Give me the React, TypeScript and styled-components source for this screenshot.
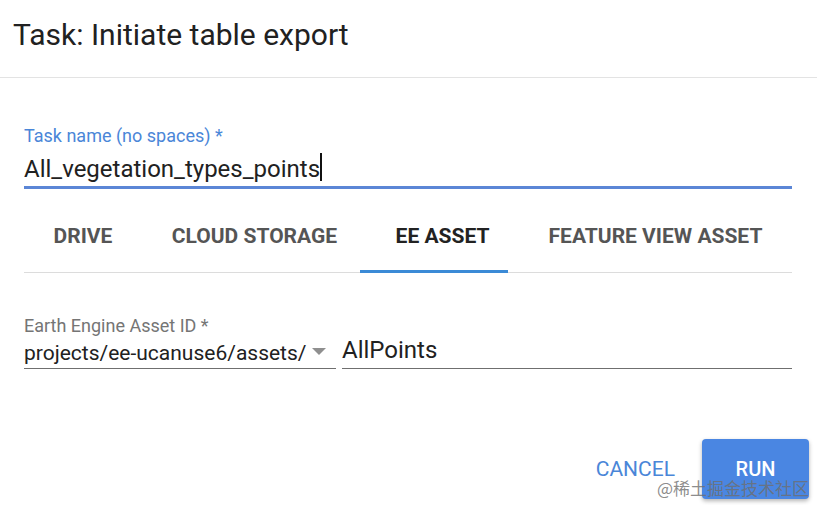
import React from "react";
import styled, { createGlobalStyle } from "styled-components";

const Global = createGlobalStyle`
  html, body { margin: 0; padding: 0; background: #fff; }
  body { font-family: Roboto, "Noto Sans", Arial, sans-serif; }
  * { box-sizing: border-box; }
`;

const Dialog = styled.div`
  position: relative;
  width: 817px;
  height: 505px;
  background: #fff;
  display: flex;
  flex-direction: column;
  overflow: hidden;
`;

const Header = styled.div`
  flex-shrink: 0;
  height: 78px;
  border-bottom: 1px solid #e3e3e3;
  padding: 17px 13px 0;
`;

const Title = styled.h1`
  margin: 0;
  font-size: 30px;
  font-weight: 400;
  color: #212121;
  line-height: 36px;
`;

const Body = styled.div`
  flex-shrink: 0;
  padding: 47px 25px 0 24px;
  display: flex;
  flex-direction: column;
`;

const Label = styled.div<{ $focused?: boolean }>`
  font-size: 18px;
  line-height: 21px;
  color: ${(p) => (p.$focused ? "#4a86d8" : "#757575")};
`;

const TextField = styled.div<{ $focused?: boolean; $top?: number; $bottom?: number }>`
  font-size: 24px;
  line-height: 28px;
  color: #212121;
  white-space: nowrap;
  padding-top: ${(p) => p.$top ?? 9}px;
  padding-bottom: ${(p) => p.$bottom ?? 3}px;
  border-bottom: ${(p) => (p.$focused ? "3px solid #5b86d6" : "1px solid #6f6f6f")};
`;

const Caret = styled.span`
  display: inline-block;
  width: 2px;
  height: 28px;
  background: #111;
  vertical-align: top;
  position: relative;
  top: -2px;
`;

const Tabs = styled.div`
  display: flex;
  height: 84px;
  border-bottom: 1px solid #dcdcdc;
`;

const Tab = styled.div<{ $active?: boolean; $w: number; $shift: number }>`
  position: relative;
  width: ${(p) => p.$w}px;
  display: flex;
  justify-content: center;
  padding-top: 35px;
  padding-left: ${(p) => p.$shift}px;
  font-size: 21px;
  font-weight: 700;
  color: ${(p) => (p.$active ? "#222" : "#555")};
  white-space: nowrap;
  &::after {
    content: "";
    display: ${(p) => (p.$active ? "block" : "none")};
    position: absolute;
    left: 0;
    right: 0;
    bottom: -1px;
    height: 3px;
    background: #3b8ad6;
  }
`;

const AssetSection = styled.div`
  margin-top: 42px;
`;

const AssetRow = styled.div`
  display: flex;
  align-items: flex-end;
  gap: 6px;
`;

const Select = styled.div`
  width: 312px;
  display: flex;
  align-items: center;
  justify-content: space-between;
  padding: 5px 10px 2px 0;
  border-bottom: 1px solid #6f6f6f;
  font-size: 21px;
  line-height: 25px;
  color: #212121;
  white-space: nowrap;
`;

const Arrow = styled.span`
  width: 0;
  height: 0;
  border-left: 7px solid transparent;
  border-right: 7px solid transparent;
  border-top: 7px solid #8f8f8f;
  margin-top: -4px;
`;

const AssetInput = styled(TextField)`
  flex: 1;
`;

const Actions = styled.div`
  flex-shrink: 0;
  display: flex;
  justify-content: flex-end;
  align-items: center;
  gap: 27px;
  padding-right: 8px;
  margin-top: 70px;
`;

const FlatButton = styled.button`
  border: none;
  background: none;
  font-family: inherit;
  font-size: 21px;
  color: #4a86d8;
  padding: 0;
  cursor: pointer;
`;

const RaisedButton = styled.button`
  width: 107px;
  height: 60px;
  border: none;
  border-radius: 4px;
  background: #4a86e2;
  color: #fff;
  font-family: inherit;
  font-size: 20px;
  font-weight: 500;
  box-shadow: 0 2px 4px rgba(0, 0, 0, 0.3);
  cursor: pointer;
`;

const Watermark = styled.div`
  position: absolute;
  right: 8px;
  bottom: 5px;
  font-size: 17px;
  color: rgba(110, 110, 110, 0.8);
  font-family: "Noto Sans CJK SC", sans-serif;
  pointer-events: none;
`;

export default function App() {
  return (
    <>
      <Global />
      <Dialog>
        <Header>
          <Title>Task: Initiate table export</Title>
        </Header>
        <Body>
          <Label $focused>Task name (no spaces) *</Label>
          <TextField $focused>
            All_vegetation_types_points
            <Caret />
          </TextField>
          <Tabs>
            <Tab $w={118} $shift={0}>DRIVE</Tab>
            <Tab $w={218} $shift={7}>CLOUD STORAGE</Tab>
            <Tab $w={148} $shift={17} $active>
              EE ASSET
            </Tab>
            <Tab $w={284} $shift={11}>FEATURE VIEW ASSET</Tab>
          </Tabs>
          <AssetSection>
            <Label>Earth Engine Asset ID *</Label>
            <AssetRow>
              <Select>
                <span>projects/ee-ucanuse6/assets/</span>
                <Arrow />
              </Select>
              <AssetInput $top={0} $bottom={4}>AllPoints</AssetInput>
            </AssetRow>
          </AssetSection>
        </Body>
        <Actions>
          <FlatButton>CANCEL</FlatButton>
          <RaisedButton>RUN</RaisedButton>
        </Actions>
        <Watermark>@稀土掘金技术社区</Watermark>
      </Dialog>
    </>
  );
}
